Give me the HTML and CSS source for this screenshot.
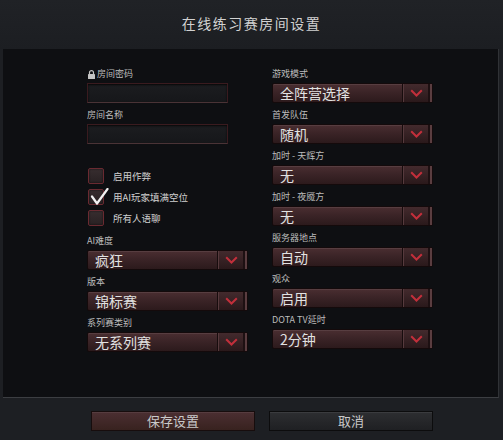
FILE: index.html
```html
<!DOCTYPE html>
<html lang="zh-CN">
<head>
  <meta charset="UTF-8">
  <meta name="viewport" content="width=device-width, initial-scale=1.0">
  <title>在线练习赛房间设置</title>
  <link rel="stylesheet" href="styles.css">
</head>
<body>
  <div class="dialog">
    <header class="title">在线练习赛房间设置</header>

    <main class="panel">
      <div class="col left">
        <div class="field">
          <div class="label">
            <svg class="lock" width="7" height="9" viewBox="0 0 7 9">
              <path d="M1.5 4 V2.6 A2 2 0 0 1 5.5 2.6 V4" fill="none" stroke="#c4c4c4" stroke-width="1.2"/>
              <rect x="0" y="4" width="7" height="5" rx="0.6" fill="#c4c4c4"/>
            </svg>房间密码
          </div>
          <div class="textbox"></div>
        </div>
        <div class="field">
          <div class="label">房间名称</div>
          <div class="textbox"></div>
        </div>

        <div class="checks">
          <div class="check"><span class="box"></span>启用作弊</div>
          <div class="check">
            <span class="box">
              <svg class="tick" width="20" height="18" viewBox="0 0 20 18">
                <path d="M3 8.5 L8 15.5 L18.5 1" fill="none" stroke="#f2f2f2" stroke-width="2.2" stroke-linecap="round" stroke-linejoin="round"/>
              </svg>
            </span>用AI玩家填满空位
          </div>
          <div class="check"><span class="box"></span>所有人语聊</div>
        </div>

        <div class="field">
          <div class="label">AI难度</div>
          <div class="select"><span class="value">疯狂</span><span class="arrow"><svg width="13" height="8" viewBox="0 0 13 8"><path d="M1.2 1.2 L6.5 6.5 L11.8 1.2" fill="none" stroke="#c22f3b" stroke-width="2"/></svg></span></div>
        </div>
        <div class="field">
          <div class="label">版本</div>
          <div class="select"><span class="value">锦标赛</span><span class="arrow"><svg width="13" height="8" viewBox="0 0 13 8"><path d="M1.2 1.2 L6.5 6.5 L11.8 1.2" fill="none" stroke="#c22f3b" stroke-width="2"/></svg></span></div>
        </div>
        <div class="field">
          <div class="label">系列赛类别</div>
          <div class="select"><span class="value">无系列赛</span><span class="arrow"><svg width="13" height="8" viewBox="0 0 13 8"><path d="M1.2 1.2 L6.5 6.5 L11.8 1.2" fill="none" stroke="#c22f3b" stroke-width="2"/></svg></span></div>
        </div>
      </div>

      <div class="col right">
        <div class="field">
          <div class="label">游戏模式</div>
          <div class="select"><span class="value">全阵营选择</span><span class="arrow"><svg width="13" height="8" viewBox="0 0 13 8"><path d="M1.2 1.2 L6.5 6.5 L11.8 1.2" fill="none" stroke="#c22f3b" stroke-width="2"/></svg></span></div>
        </div>
        <div class="field">
          <div class="label">首发队伍</div>
          <div class="select"><span class="value">随机</span><span class="arrow"><svg width="13" height="8" viewBox="0 0 13 8"><path d="M1.2 1.2 L6.5 6.5 L11.8 1.2" fill="none" stroke="#c22f3b" stroke-width="2"/></svg></span></div>
        </div>
        <div class="field">
          <div class="label">加时 - 天辉方</div>
          <div class="select"><span class="value">无</span><span class="arrow"><svg width="13" height="8" viewBox="0 0 13 8"><path d="M1.2 1.2 L6.5 6.5 L11.8 1.2" fill="none" stroke="#c22f3b" stroke-width="2"/></svg></span></div>
        </div>
        <div class="field">
          <div class="label">加时 - 夜魇方</div>
          <div class="select"><span class="value">无</span><span class="arrow"><svg width="13" height="8" viewBox="0 0 13 8"><path d="M1.2 1.2 L6.5 6.5 L11.8 1.2" fill="none" stroke="#c22f3b" stroke-width="2"/></svg></span></div>
        </div>
        <div class="field">
          <div class="label">服务器地点</div>
          <div class="select"><span class="value">自动</span><span class="arrow"><svg width="13" height="8" viewBox="0 0 13 8"><path d="M1.2 1.2 L6.5 6.5 L11.8 1.2" fill="none" stroke="#c22f3b" stroke-width="2"/></svg></span></div>
        </div>
        <div class="field">
          <div class="label">观众</div>
          <div class="select"><span class="value">启用</span><span class="arrow"><svg width="13" height="8" viewBox="0 0 13 8"><path d="M1.2 1.2 L6.5 6.5 L11.8 1.2" fill="none" stroke="#c22f3b" stroke-width="2"/></svg></span></div>
        </div>
        <div class="field">
          <div class="label">DOTA TV延时</div>
          <div class="select"><span class="value">2分钟</span><span class="arrow"><svg width="13" height="8" viewBox="0 0 13 8"><path d="M1.2 1.2 L6.5 6.5 L11.8 1.2" fill="none" stroke="#c22f3b" stroke-width="2"/></svg></span></div>
        </div>
      </div>
    </main>

    <footer class="actions">
      <button class="btn primary">保存设置</button>
      <button class="btn">取消</button>
    </footer>
  </div>
</body>
</html>
```

FILE: styles.css
```css
:root {
  --bg: #1d1f23;
  --panel: #0e0f12;
  --label: #bdbdbd;
  --text: #e2e2e2;
}
body {
  margin: 0;
  width: 503px;
  height: 440px;
  overflow: hidden;
  background: var(--bg);
  font-family: "Noto Sans CJK SC", "Noto Sans", sans-serif;
  color: var(--text);
}
.dialog {
  display: flex;
  flex-direction: column;
  height: 440px;
}
.title {
  height: 49px;
  box-sizing: border-box;
  padding-bottom: 3px;
  display: flex;
  align-items: center;
  justify-content: center;
  font-size: 14px;
  letter-spacing: 1.5px;
  color: #d2d2d2;
  background: linear-gradient(#202226, #1c1e22);
}
.panel {
  height: 349px;
  box-sizing: border-box;
  margin: 0 4px 0 3px;
  padding: 19px 0 0 84px;
  display: flex;
  gap: 24px;
  background: var(--panel);
  border-right: 1px solid #303236;
  border-bottom: 1px solid #3c3e42;
}
.col {
  width: 161px;
  display: flex;
  flex-direction: column;
}
.field {
  margin-bottom: 6px;
}
.label {
  height: 12px;
  line-height: 12px;
  font-size: 9px;
  color: var(--label);
  margin-bottom: 3px;
  display: flex;
  align-items: center;
  white-space: nowrap;
}
.lock {
  margin: 0 2px 0 1px;
}
.textbox {
  width: 141px;
  height: 20px;
  box-sizing: border-box;
  background: linear-gradient(#1c1d20, #16171a);
  border: 1px solid #3a1b1f;
  border-bottom-color: #4a3336;
  box-shadow: inset 0 1px 2px rgba(0, 0, 0, 0.8);
}
.checks {
  margin: 18px 0 9px;
  display: flex;
  flex-direction: column;
  gap: 5px;
}
.check {
  height: 16px;
  display: flex;
  align-items: center;
  gap: 9px;
  font-size: 9.5px;
  color: #d0d0d0;
}
.box {
  position: relative;
  width: 16px;
  height: 16px;
  margin-left: 1px;
  box-sizing: border-box;
  border: 1px solid #6a2a31;
  border-radius: 2px;
  background: linear-gradient(#372d2f, #292123);
  box-shadow: inset 0 0 2px rgba(0, 0, 0, 0.7);
}
.tick {
  position: absolute;
  left: 0;
  top: -2px;
}
.select {
  height: 20px;
  box-sizing: border-box;
  display: flex;
  border: 1px solid #140a0b;
  border-radius: 2px;
  background: linear-gradient(#4a2e31 0%, #3b2427 45%, #2c1a1c 100%);
  box-shadow: inset 0 1px 0 rgba(255, 255, 255, 0.08);
}
.value {
  flex: 1;
  padding-left: 7px;
  line-height: 19px;
  font-size: 14px;
  color: var(--text);
  white-space: nowrap;
}
.arrow {
  width: 27px;
  display: flex;
  align-items: center;
  justify-content: center;
  border-left: 1px solid #170c0d;
  border-right: 2px solid #5a3d40;
  box-shadow: inset 1px 0 0 #563a3d, inset -2px 0 0 #1d1012;
  background: linear-gradient(#432a2d, #2a191b);
}
.actions {
  flex: 1;
  padding: 13px 0 0 91px;
  display: flex;
  align-items: flex-start;
  gap: 14px;
}
.btn {
  width: 164px;
  height: 20px;
  padding: 0;
  font-family: inherit;
  font-size: 13px;
  line-height: 18px;
  color: #c9c9c9;
  border: 1px solid #0c0c0d;
  background: linear-gradient(#2d2e31, #1f2023);
  box-shadow: inset 0 1px 0 rgba(255, 255, 255, 0.07);
  cursor: pointer;
}
.btn.primary {
  background: linear-gradient(#4b2f32, #38221f);
  border-color: #170d0d;
}
```
